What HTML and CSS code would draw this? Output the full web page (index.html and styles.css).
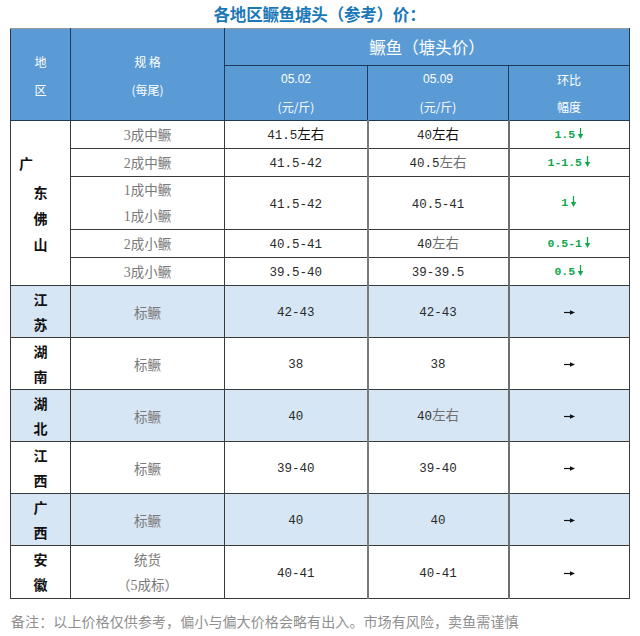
FILE: index.html
```html
<!DOCTYPE html>
<html lang="zh">
<head>
<meta charset="utf-8">
<link rel="stylesheet" href="styles.css">
</head>
<body>
<div class="page">
  <h1 class="title">各地区鳜鱼塘头（参考）价：</h1>
  <table class="price">
    <colgroup>
      <col class="c1"><col class="c2"><col class="c3"><col class="c4"><col class="c5">
    </colgroup>
    <thead>
      <tr class="h1">
        <th rowspan="2" class="hs"><div>地</div><div>区</div></th>
        <th rowspan="2" class="hs"><div>规 格</div><div>(每尾)</div></th>
        <th colspan="3" class="big">鳜鱼（塘头价）</th>
      </tr>
      <tr class="h2">
        <th><div class="lat">05.02</div><div>(元/斤)</div></th>
        <th><div class="lat">05.09</div><div>(元/斤)</div></th>
        <th><div>环比</div><div>幅度</div></th>
      </tr>
    </thead>
    <tbody>
      <tr class="r28">
        <td rowspan="5" class="prov gd"><div class="first">广</div><div>东</div><div>佛</div><div>山</div></td>
        <td class="spec"><span class="d">3</span>成中鳜</td>
        <td class="pr dark"><span class="n">41.5</span>左右</td>
        <td class="pr dark"><span class="n">40</span>左右</td>
        <td class="chg">1.5<svg class="dn" viewBox="0 0 7 11"><path d="M3.5 0v7" stroke="#10a84c" stroke-width="1.3"/><path d="M0.8 6h5.4L3.5 11z" fill="#10a84c"/></svg></td>
      </tr>
      <tr class="r28">
        <td class="spec"><span class="d">2</span>成中鳜</td>
        <td class="pr"><span class="n">41.5-42</span></td>
        <td class="pr"><span class="n">40.5</span><span class="lt">左右</span></td>
        <td class="chg">1-1.5<svg class="dn" viewBox="0 0 7 11"><path d="M3.5 0v7" stroke="#10a84c" stroke-width="1.3"/><path d="M0.8 6h5.4L3.5 11z" fill="#10a84c"/></svg></td>
      </tr>
      <tr class="r53">
        <td class="spec"><div><span class="d">1</span>成中鳜</div><div><span class="d">1</span>成小鳜</div></td>
        <td class="pr"><span class="n">41.5-42</span></td>
        <td class="pr"><span class="n">40.5-41</span></td>
        <td class="chg">1<svg class="dn" viewBox="0 0 7 11"><path d="M3.5 0v7" stroke="#10a84c" stroke-width="1.3"/><path d="M0.8 6h5.4L3.5 11z" fill="#10a84c"/></svg></td>
      </tr>
      <tr class="r28">
        <td class="spec"><span class="d">2</span>成小鳜</td>
        <td class="pr"><span class="n">40.5-41</span></td>
        <td class="pr"><span class="n">40</span><span class="lt">左右</span></td>
        <td class="chg">0.5-1<svg class="dn" viewBox="0 0 7 11"><path d="M3.5 0v7" stroke="#10a84c" stroke-width="1.3"/><path d="M0.8 6h5.4L3.5 11z" fill="#10a84c"/></svg></td>
      </tr>
      <tr class="r28">
        <td class="spec"><span class="d">3</span>成小鳜</td>
        <td class="pr"><span class="n">39.5-40</span></td>
        <td class="pr"><span class="n">39-39.5</span></td>
        <td class="chg">0.5<svg class="dn" viewBox="0 0 7 11"><path d="M3.5 0v7" stroke="#10a84c" stroke-width="1.3"/><path d="M0.8 6h5.4L3.5 11z" fill="#10a84c"/></svg></td>
      </tr>
      <tr class="r52 alt">
        <td class="prov"><div>江</div><div>苏</div></td>
        <td class="spec">标鳜</td>
        <td class="pr"><span class="n">42-43</span></td>
        <td class="pr"><span class="n">42-43</span></td>
        <td class="flat"><svg class="rt" viewBox="0 0 11 5"><path d="M0 2.5h7" stroke="#111" stroke-width="1.2"/><path d="M6 0.3L11 2.5L6 4.7z" fill="#111"/></svg></td>
      </tr>
      <tr class="r52">
        <td class="prov"><div>湖</div><div>南</div></td>
        <td class="spec">标鳜</td>
        <td class="pr"><span class="n">38</span></td>
        <td class="pr"><span class="n">38</span></td>
        <td class="flat"><svg class="rt" viewBox="0 0 11 5"><path d="M0 2.5h7" stroke="#111" stroke-width="1.2"/><path d="M6 0.3L11 2.5L6 4.7z" fill="#111"/></svg></td>
      </tr>
      <tr class="r52 alt">
        <td class="prov"><div>湖</div><div>北</div></td>
        <td class="spec">标鳜</td>
        <td class="pr"><span class="n">40</span></td>
        <td class="pr"><span class="n">40</span><span class="lt">左右</span></td>
        <td class="flat"><svg class="rt" viewBox="0 0 11 5"><path d="M0 2.5h7" stroke="#111" stroke-width="1.2"/><path d="M6 0.3L11 2.5L6 4.7z" fill="#111"/></svg></td>
      </tr>
      <tr class="r52">
        <td class="prov"><div>江</div><div>西</div></td>
        <td class="spec">标鳜</td>
        <td class="pr"><span class="n">39-40</span></td>
        <td class="pr"><span class="n">39-40</span></td>
        <td class="flat"><svg class="rt" viewBox="0 0 11 5"><path d="M0 2.5h7" stroke="#111" stroke-width="1.2"/><path d="M6 0.3L11 2.5L6 4.7z" fill="#111"/></svg></td>
      </tr>
      <tr class="r52 alt">
        <td class="prov"><div>广</div><div>西</div></td>
        <td class="spec">标鳜</td>
        <td class="pr"><span class="n">40</span></td>
        <td class="pr"><span class="n">40</span></td>
        <td class="flat"><svg class="rt" viewBox="0 0 11 5"><path d="M0 2.5h7" stroke="#111" stroke-width="1.2"/><path d="M6 0.3L11 2.5L6 4.7z" fill="#111"/></svg></td>
      </tr>
      <tr class="r53">
        <td class="prov"><div>安</div><div>徽</div></td>
        <td class="spec"><div>统货</div><div>（<span class="d">5</span>成标）</div></td>
        <td class="pr"><span class="n">40-41</span></td>
        <td class="pr"><span class="n">40-41</span></td>
        <td class="flat"><svg class="rt" viewBox="0 0 11 5"><path d="M0 2.5h7" stroke="#111" stroke-width="1.2"/><path d="M6 0.3L11 2.5L6 4.7z" fill="#111"/></svg></td>
      </tr>
    </tbody>
  </table>
  <p class="note">备注：以上价格仅供参考，偏小与偏大价格会略有出入。市场有风险，卖鱼需谨慎</p>
</div>
</body>
</html>
```

FILE: styles.css
```css
html, body {
  margin: 0;
  padding: 0;
  background: #ffffff;
}
body {
  font-family: "Noto Sans CJK SC", sans-serif;
  width: 640px;
  height: 636px;
  overflow: hidden;
}
.page {
  padding: 0 11px 0 10px;
}
.title {
  margin: 0;
  height: 28px;
  line-height: 28px;
  text-align: center;
  font-size: 16.5px;
  font-weight: 700;
  color: #1b78b8;
  letter-spacing: -0.2px;
}
.price {
  width: 619px;
  table-layout: fixed;
  border-collapse: collapse;
  border: 1px solid #3a3a3a;
}
.c1 { width: 60px; }
.c2 { width: 154px; }
.c3 { width: 143px; }
.c4 { width: 141px; }
.c5 { width: 121px; }

.price th {
  background: #5b9bd5;
  color: #ffffff;
  font-weight: 400;
  font-size: 12px;
  border: 1px solid #1f3a5a;
  padding: 0;
  line-height: 27px;
  vertical-align: middle;
}
.price thead tr:first-child th {
  border-top: 1px solid #9a9a9a;
}
.h1 { height: 37px; }
.h2 { height: 54px; }
.price th.hs div { line-height: 28px; }
.price th.hs { padding-top: 3px; }
.price th.big {
  font-size: 16.5px;
  line-height: 30px;
}
.lat {
  font-family: "Liberation Sans", sans-serif;
  font-size: 12px;
}

.price td {
  border: 1px solid #3a3a3a;
  padding: 0;
  text-align: center;
  vertical-align: middle;
  line-height: 18px;
}
.price td.pr + td.pr { border-left: 2px solid #7a7a7a; }
.price td.chg, .price td.flat { border-left: 2px solid #6e6e6e; }
.r28 { height: 28px; }
.r52 { height: 52px; }
.r53 { height: 53px; }
.alt td { background: #d7e6f4; }

.prov {
  font-family: "Noto Sans CJK SC", serif;
  font-weight: 700;
  font-size: 14px;
  color: #111;
}
.prov div { line-height: 25px; }
.gd div { line-height: 26px; }
.gd .first {
  text-align: left;
  padding-left: 8px;
  margin-bottom: 3px;
}
.gd { padding-bottom: 4px; }

.spec {
  font-family: "Noto Sans CJK SC", sans-serif;
  font-size: 13.5px;
  color: #7a7a7a;
}
.spec div { line-height: 25px; }
.d { font-family: "Liberation Serif", serif; font-size: 14px; }

.pr {
  font-size: 13.5px;
  color: #333;
}
.pr.dark { color: #111; }
.n {
  font-family: "Liberation Mono", monospace;
  font-size: 12.5px;
  color: #2a2a2a;
}
.lt { color: #6e6e6e; }

.chg {
  font-family: "Liberation Mono", monospace;
  font-weight: 700;
  font-size: 11.5px;
  color: #10a84c;
}
.dn {
  width: 7px;
  height: 11px;
  margin-left: 2px;
  vertical-align: -1px;
}
.price td.flat { line-height: 0; }
.rt {
  width: 11px;
  height: 5px;
}
.note {
  margin: 12px 0 0 1px;
  font-size: 14px;
  line-height: 20px;
  color: #8f8f8f;
  letter-spacing: 0.1px;
}
```
